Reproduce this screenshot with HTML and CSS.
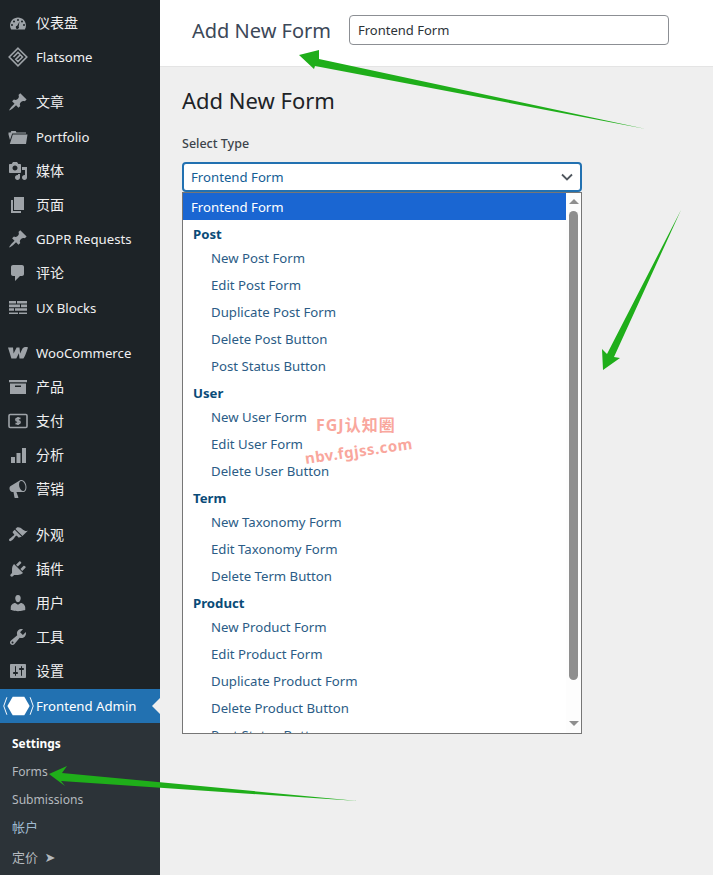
FILE: index.html
```html
<!DOCTYPE html>
<html lang="zh">
<head>
<meta charset="utf-8">
<title>Add New Form</title>
<link rel="stylesheet" href="styles.css">
</head>
<body>
<svg class="defs" width="0" height="0" aria-hidden="true">
  <symbol id="i-pin" viewBox="0 0 20 20"><path d="M10.44 3.02l1.82-1.82 6.36 6.35-1.83 1.82c-1.05-.68-2.48-.57-3.41.36l-.75.75c-.92.93-1.04 2.35-.35 3.41l-1.83 1.82-2.41-2.41-2.8 2.79c-.42.42-3.38 2.71-3.8 2.29s1.86-3.39 2.28-3.81l2.79-2.79L4.1 9.36l1.83-1.82c1.05.69 2.48.57 3.4-.36l.75-.75c.93-.92 1.05-2.35.36-3.41z"/></symbol>
</svg>
<div class="layout">
  <nav class="sidebar">
    <ul class="menu-group">
      <li class="item"><svg class="icon" viewBox="0 0 20 20"><path fill-rule="evenodd" d="M3.2 16.5C2.4 15.3 2 13.900 2 12.500 2 8.100 5.600 4.500 10 4.500s8 3.600 8 8c0 1.400-.4 2.800-1.200 4zM10 6a1 1 0 1 0 0 2 1 1 0 0 0 0-2zM6 7.400a1 1 0 1 0 0 2 1 1 0 0 0 0-2zm8 0a1 1 0 1 0 0 2 1 1 0 0 0 0-2zM4 11a1 1 0 1 0 0 2 1 1 0 0 0 0-2zm12 0a1 1 0 1 0 0 2 1 1 0 0 0 0-2zM11.500 8.500L9.200 12.800a1.600 1.600 0 1 0 1.500.7z"/></svg><span class="cjk">仪表盘</span></li>
      <li class="item"><svg class="icon" viewBox="0 0 20 20"><path class="line" d="M10 1.200L18.800 10 10 18.800 1.200 10z"/><path class="line" d="M5.500 10L10 5.500l2.300 2.300M10 14.500l4.500-4.500-2.200-2.200-2.300 2.300-2.200 2.200z"/></svg><span>Flatsome</span></li>
    </ul>
    <ul class="menu-group gap-first">
      <li class="item"><svg class="icon" viewBox="0 0 20 20"><use href="#i-pin"/></svg><span class="cjk">文章</span></li>
      <li class="item tall"><svg class="icon" viewBox="0 0 20 20"><path d="M.5 5.500h2.200l.6-1.500h4.400l.7 1.500H18v1H4.200L2 13 .5 7.500zM4.800 7.500H19.500L18 17H1.800z"/></svg><span>Portfolio</span></li>
      <li class="item"><svg class="icon" viewBox="0 0 20 20"><path fill-rule="evenodd" d="M13 11V4c0-.55-.45-1-1-1h-1.670L9 1H5L3.670 3H2c-.55 0-1 .45-1 1v7c0 .55.45 1 1 1h10c.55 0 1-.45 1-1zM7 4.500c1.380 0 2.500 1.120 2.500 2.500S8.380 9.500 7 9.500 4.500 8.380 4.500 7 5.620 4.500 7 4.500zM14 6h5v10.500c0 1.380-1.120 2.500-2.500 2.500S14 17.880 14 16.500s1.120-2.500 2.500-2.500c.17 0 .34.02.5.05V9h-3V6zm-4 8.050V13h2v3.500c0 1.380-1.120 2.500-2.500 2.500S7 17.880 7 16.500 8.120 14 9.500 14c.17 0 .34.02.5.05z"/></svg><span class="cjk">媒体</span></li>
      <li class="item"><svg class="icon" viewBox="0 0 20 20"><path d="M6 15V2h10v13H6zm-1 1h8v2H3V5h2v11z"/></svg><span class="cjk">页面</span></li>
      <li class="item"><svg class="icon" viewBox="0 0 20 20"><use href="#i-pin"/></svg><span>GDPR Requests</span></li>
      <li class="item"><svg class="icon" viewBox="0 0 20 20"><path d="M5 2h9c1.100 0 2 .9 2 2v7c0 1.100-.9 2-2 2h-2l-5 5v-5H5c-1.100 0-2-.9-2-2V4c0-1.100.9-2 2-2z"/></svg><span class="cjk">评论</span></li>
      <li class="item tall"><svg class="icon" viewBox="0 0 20 20"><path d="M1 3h7v2.600H1zM9 3h10v2.600H9zM1 6.600h11v2.600H1zM13 6.600h6v2.600h-6zM1 10.200h5v2.600H1zM7 10.200h12v2.600H7zM1 14.600h9V16H1zM11 14.600h8V16h-8z"/></svg><span>UX Blocks</span></li>
    </ul>
    <ul class="menu-group gap-second">
      <li class="item"><svg class="icon" viewBox="0 0 20 20"><path d="M0 4.500h5l.6 6 3-6h2.900l.6 6 2.300-4.800c.7-1.400 3.600-2.100 5.600-1.200-.5 1.300-2.300 7.900-4.600 11h-3.900l-.6-5.200-2.600 5.200H3.400z"/></svg><span>WooCommerce</span></li>
      <li class="item"><svg class="icon" viewBox="0 0 20 20"><path fill-rule="evenodd" d="M1 3h18v2.200H1zM2 6.500h16V17H2zM7 8.500v1.600h6V8.500z"/></svg><span class="cjk">产品</span></li>
      <li class="item"><svg class="icon" viewBox="0 0 20 20"><rect class="line" x="1" y="3.500" width="18" height="13" rx="1.200"/><path class="line" d="M12.500 7.400H9.200a1.300 1.300 0 0 0 0 2.600h1.600a1.300 1.300 0 0 1 0 2.600H7.500M10 6v8"/></svg><span class="cjk">支付</span></li>
      <li class="item"><svg class="icon" viewBox="0 0 20 20"><path d="M3 12h4v6H3zM8.500 8h4v10h-4zM14 3h4v15h-4z"/></svg><span class="cjk">分析</span></li>
      <li class="item"><svg class="icon" viewBox="0 0 20 20"><path fill-rule="evenodd" d="M18.150 5.940c.46 1.620.38 3.220-.02 4.480-.42 1.280-1.260 2.180-2.300 2.480-.16.06-.26.06-.4.06h-7l2.020 5.500c.02.14-.06.26-.14.34-.08.10-.24.16-.34.16H6.950c-.1 0-.26-.06-.34-.16-.08-.08-.16-.2-.14-.34l-1-5.500H4.250c-.5.06-1.080-.18-1.540-.62s-.88-1.080-1.060-1.880c-.24-.8-.2-1.560-.02-2.200.18-.62.58-1.080 1.060-1.300l9.020-5.420c.36-.22.66-.36 1-.46 1.040-.3 2.240.1 3.220.98s1.840 2.240 2.260 3.860zm-2.600 5.980c.4-.1.740-.34 1.040-.7.58-.7.860-1.760.860-3.040 0-.64-.1-1.300-.26-1.980-.34-1.360-1.020-2.500-1.780-3.240s-1.680-1.100-2.460-.88c-.82.22-1.400.96-1.700 2-.32 1.040-.28 2.360.06 3.720.38 1.360 1 2.500 1.800 3.240.78.74 1.620 1.100 2.440.88z"/></svg><span class="cjk">营销</span></li>
    </ul>
    <ul class="menu-group gap-third">
      <li class="item"><svg class="icon" viewBox="0 0 20 20"><path d="M14.480 11.060L7.410 3.990l1.500-1.500c.5-.56 2.300-.47 3.510.32 1.210.8 1.430 1.280 2.910 2.100 1.180.64 2.450 1.260 4.450.85zm-.71.71L6.700 4.700 4.930 6.470c-.39.39-.39 1.020 0 1.410l1.060 1.060c.39.39.39 1.030 0 1.420-.6.6-1.430 1.110-2.210 1.690-.35.26-.7.53-1.010.84C1.430 13.230.4 14.890 1.300 15.790c.9.9 2.560-.13 3.900-1.470.31-.31.58-.66.85-1.010.58-.78 1.090-1.610 1.690-2.210.39-.39 1.020-.39 1.410 0l1.060 1.060c.39.39 1.020.39 1.410 0z"/></svg><span class="cjk">外观</span></li>
      <li class="item"><svg class="icon" viewBox="0 0 20 20"><path d="M13.110 4.360L9.870 7.600 8 5.730l3.240-3.240c.35-.34 1.050-.2 1.560.32.52.51.66 1.210.31 1.550zm-8 1.770l.91-1.120 9.010 9.010-1.190.84c-.71.71-2.630 1.160-3.820 1.160H6.140L4.900 17.260c-.59.59-1.540.59-2.120 0-.59-.58-.59-1.530 0-2.120l1.240-1.240v-3.880c0-1.130.4-3.190 1.090-3.890zm7.260 3.970l3.240-3.240c.34-.35 1.040-.21 1.550.31.52.51.66 1.210.31 1.550l-3.240 3.250z"/></svg><span class="cjk">插件</span></li>
      <li class="item"><svg class="icon" viewBox="0 0 20 20"><path d="M10 9.250c-2.270 0-2.730-3.440-2.730-3.440C7 4.020 7.820 2 9.970 2c2.160 0 2.980 2.020 2.710 3.810 0 0-.41 3.440-2.680 3.440zm0 2.570L12.720 10c2.390 0 4.520 2.330 4.520 4.530v2.490s-3.650 1.130-7.240 1.130c-3.650 0-7.240-1.130-7.240-1.130v-2.490c0-2.250 1.940-4.480 4.470-4.480z"/></svg><span class="cjk">用户</span></li>
      <li class="item"><svg class="icon" viewBox="0 0 20 20"><path fill-rule="evenodd" d="M16.680 9.770c-1.340 1.340-3.300 1.670-4.950.99l-5.410 6.520c-.99.99-2.590.99-3.580 0s-.99-2.590 0-3.570l6.520-5.420c-.68-1.650-.35-3.610.99-4.950 1.280-1.280 3.120-1.620 4.720-1.060l-2.890 2.890 2.820 2.820 2.860-2.870c.53 1.580.18 3.390-1.080 4.650zM3.810 16.210c.4.39 1.040.39 1.430 0 .4-.4.4-1.040 0-1.430-.39-.4-1.030-.4-1.430 0-.39.39-.39 1.030 0 1.430z"/></svg><span class="cjk">工具</span></li>
      <li class="item"><svg class="icon" viewBox="0 0 20 20"><path fill-rule="evenodd" d="M18 16V4c0-.55-.45-1-1-1H3c-.55 0-1 .45-1 1v12c0 .55.45 1 1 1h14c.55 0 1-.45 1-1zM8 11h1c.55 0 1 .45 1 1s-.45 1-1 1H8v1.500c0 .28-.22.5-.5.5s-.5-.22-.5-.5V13H6c-.55 0-1-.45-1-1s.45-1 1-1h1V5.500c0-.28.22-.5.5-.5s.5.22.5.5V11zm5-2h-1c-.55 0-1-.45-1-1s.45-1 1-1h1V5.500c0-.28.22-.5.5-.5s.5.22.5.5V7h1c.55 0 1 .45 1 1s-.45 1-1 1h-1v5.500c0 .28-.22.5-.5.5s-.5-.22-.5-.5V9z"/></svg><span class="cjk">设置</span></li>
      <li class="item active"><svg class="logo" viewBox="0 0 32 20"><path d="M10 .5h12L27.500 10 22 19.500H10L4.500 10z"/><path class="chev" d="M4 1L.8 10 4 19M28 1l3.200 9L28 19"/></svg><span>Frontend Admin</span></li>
    </ul>
    <ul class="submenu">
      <li class="sub strong">Settings</li>
      <li class="sub">Forms</li>
      <li class="sub">Submissions</li>
      <li class="sub blue">帐户</li>
      <li class="sub price">定价 <span class="sub-arrow">➤</span></li>
    </ul>
  </nav>
  <div class="main">
    <header class="topbar">
      <div class="topbar-title">Add New Form</div>
      <div class="title-input">Frontend Form</div>
    </header>
    <section class="content">
      <h1 class="heading">Add New Form</h1>
      <div class="field-label">Select Type</div>
      <div class="select">
        <span>Frontend Form</span>
        <svg class="chevron" viewBox="0 0 12 8"><path d="M1 1.500L6 6.500 11 1.500"/></svg>
      </div>
      <div class="listbox">
        <div class="options">
          <div class="option selected">Frontend Form</div>
          <div class="group">Post</div>
          <div class="option child first">New Post Form</div>
          <div class="option child">Edit Post Form</div>
          <div class="option child">Duplicate Post Form</div>
          <div class="option child">Delete Post Button</div>
          <div class="option child">Post Status Button</div>
          <div class="group">User</div>
          <div class="option child first">New User Form</div>
          <div class="option child">Edit User Form</div>
          <div class="option child">Delete User Button</div>
          <div class="group">Term</div>
          <div class="option child first">New Taxonomy Form</div>
          <div class="option child">Edit Taxonomy Form</div>
          <div class="option child">Delete Term Button</div>
          <div class="group">Product</div>
          <div class="option child first">New Product Form</div>
          <div class="option child">Edit Product Form</div>
          <div class="option child">Duplicate Product Form</div>
          <div class="option child">Delete Product Button</div>
          <div class="option child">Post Status Button</div>
        </div>
        <div class="scrollbar">
          <span class="tri up"></span>
          <span class="thumb"></span>
          <span class="tri down"></span>
        </div>
      </div>
    </section>
  </div>
</div>
<div class="watermark">
  <div class="wm-one">FGJ认知圈</div>
  <div class="wm-two">nbv.fgjss.com</div>
</div>
<svg class="arrows" viewBox="0 0 713 875" aria-hidden="true">
  <polygon points="646,129 319,59 319,50 299,55 314,69 315,66"/>
  <polygon points="681,210 614,357 620,358 603,370 602,349 607,354"/>
  <polygon points="358,801 62,773 67,766 49,774 65,786 61,781"/>
</svg>
</body>
</html>
```
FILE: styles.css
```css
* { box-sizing: border-box; }
html, body { margin: 0; padding: 0; }
body {
  position: relative;
  width: 713px;
  height: 875px;
  overflow: hidden;
  background: #efefef;
  font-family: "Noto Sans", "Noto Sans CJK SC", sans-serif;
  font-size: 13.2px;
  color: #2c3338;
}
.defs { position: absolute; }
.layout { display: flex; height: 875px; }
.sidebar {
  flex: 0 0 160px;
  background: #1d2327;
  padding-top: 6px;
  display: flex;
  flex-direction: column;
}
ul { list-style: none; margin: 0; padding: 0; }
.gap-first { margin-top: 11px; }
.gap-second { margin-top: 11px; }
.gap-third { margin-top: 12px; }
.item {
  position: relative;
  display: flex;
  align-items: center;
  height: 34px;
  padding-left: 8px;
  gap: 8px;
  color: #f0f0f1;
}
.item.tall { height: 35px; }
.cjk { font-size: 14px; margin-bottom: 2px; }
.icon { width: 20px; height: 20px; flex: none; fill: #9ea3a8; }
.icon .line { fill: none; stroke: #9ea3a8; stroke-width: 1.6; }
.active {
  margin-top: 1px;
  background: #2271b1;
  color: #fff;
  padding-left: 3px;
  gap: 2px;
}
.active::after {
  content: "";
  position: absolute;
  right: 0;
  top: 9px;
  border: 8px solid transparent;
  border-right-color: #efefef;
  border-left: 0;
}
.logo { width: 31px; height: 20px; flex: none; fill: #fff; }
.logo .chev { fill: none; stroke: #fff; stroke-width: 1; }
.submenu {
  flex: 1;
  background: #2c3338;
  padding-top: 7px;
}
.sub {
  height: 28px;
  line-height: 28px;
  padding-left: 12px;
  font-size: 12.1px;
  color: #b4b9be;
}
.sub.strong { font-weight: 700; font-size: 11.9px; line-height: 26px; color: #fff; }
.sub.blue { font-size: 13px; line-height: 26px; color: #9fb9cf; }
.sub.price { font-size: 13px; line-height: 30px; }
.sub-arrow { margin-left: 3px; font-size: 13px; font-family: "DejaVu Sans", sans-serif; }
.main { flex: 1; display: flex; flex-direction: column; min-width: 0; }
.topbar {
  height: 67px;
  background: #fff;
  border-bottom: 1px solid #e4e4e4;
  display: flex;
  align-items: flex-start;
  padding: 15px 0 0 32px;
}
.topbar-title {
  width: 157px;
  font-size: 20px;
  line-height: 32px;
  color: #3c4858;
}
.title-input {
  width: 320px;
  height: 30px;
  border: 1px solid #8c8f94;
  border-radius: 4px;
  padding-left: 8px;
  line-height: 28px;
  font-size: 13px;
  color: #2c3338;
}
.content { padding: 17px 0 0 22px; }
.heading {
  margin: 0;
  font-size: 22px;
  font-weight: 400;
  line-height: 32px;
  color: #1d2327;
}
.field-label {
  margin-top: 19px;
  font-size: 12.5px;
  font-weight: 500;
  line-height: 18px;
  color: #3c434a;
}
.select {
  margin-top: 9px;
  width: 400px;
  height: 30px;
  border: 2px solid #2271b1;
  border-radius: 4px;
  background: #fff;
  padding: 0 7px;
  display: flex;
  align-items: center;
  justify-content: space-between;
  color: #135e96;
}
.chevron { width: 12px; height: 8px; fill: none; stroke: #50575e; stroke-width: 1.8; }
.listbox {
  width: 400px;
  height: 542px;
  background: #fff;
  border: 1px solid #767676;
  display: flex;
  overflow: hidden;
}
.options { flex: 1; min-width: 0; }
.option {
  height: 27px;
  line-height: 27px;
  padding-left: 8px;
  color: #2b5c86;
}
.option.selected { background: #1a66d2; color: #fff; line-height: 28px; }
.option.child { padding-left: 28px; }
.option.first { margin-top: -3px; }
.group {
  height: 27px;
  line-height: 29px;
  padding-left: 10px;
  font-weight: 700;
  color: #0a4b78;
}
.group + .option.first { line-height: 29px; }
.option.child { line-height: 29px; }
.scrollbar {
  flex: 0 0 15px;
  background: #fdfdfd;
  display: flex;
  flex-direction: column;
  align-items: center;
  padding: 6px 0 7px;
  justify-content: space-between;
}
.thumb { width: 9px; flex: 1; margin: 7px 0 41px; border-radius: 5px; background: #8f8f8f; }
.tri { width: 0; height: 0; border-left: 5px solid transparent; border-right: 5px solid transparent; }
.tri.up { border-bottom: 5px solid #8f8f8f; }
.tri.down { border-top: 5px solid #8f8f8f; }
.watermark {
  position: absolute;
  left: 316px;
  top: 414px;
  color: #f9a79d;
  font-weight: 700;
  font-size: 16px;
  line-height: 22px;
}
.wm-one { letter-spacing: 1px; }
.wm-two {
  margin: 11px 0 0 -11px;
  font-size: 15px;
  letter-spacing: 0.5px;
  transform: rotate(-8deg);
  transform-origin: left center;
  white-space: nowrap;
}
.arrows {
  position: absolute;
  left: 0;
  top: 0;
  width: 713px;
  height: 875px;
  fill: #1fae1a;
  pointer-events: none;
}
```
